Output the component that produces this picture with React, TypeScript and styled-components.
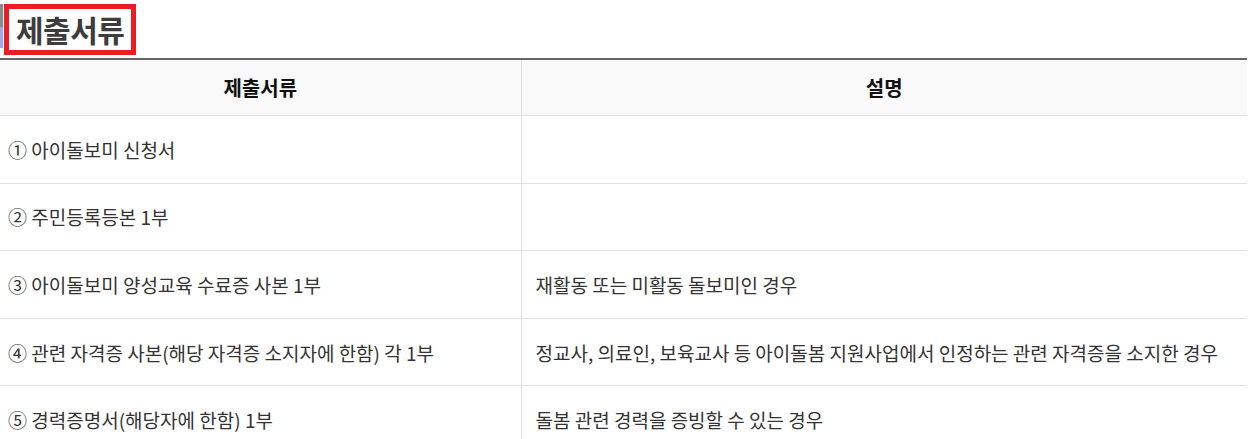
import React from "react";
import styled, { createGlobalStyle } from "styled-components";

const Global = createGlobalStyle`
  html, body { margin: 0; padding: 0; background: #fff; }
  body { font-family: "Noto Sans CJK KR", "Noto Sans", sans-serif; color: #333; }
`;

const Page = styled.div`
  width: 1247px;
`;

const TitleRow = styled.div`
  display: flex;
  align-items: flex-start;
  height: 58px;
`;

const Marker = styled.div`
  width: 3px;
  margin-top: 4px;
  display: flex;
  flex-direction: column;
`;

const MarkerPart = styled.span<{ $color: string; $h: number }>`
  display: block;
  height: ${(p) => p.$h}px;
  background: ${(p) => p.$color};
`;

const TitleBox = styled.h2`
  margin: 4px 0 0 1px;
  border: 5px solid #ec1c24;
  padding: 0 7px;
  height: 41px;
  line-height: 41px;
  font-size: 30px;
  font-weight: 700;
  color: #3d3d3d;
  letter-spacing: -0.5px;
`;

const Table = styled.table`
  width: 1247px;
  border-collapse: collapse;
  border-top: 2px solid #666;
  table-layout: fixed;
`;

const Th = styled.th`
  height: 55px;
  padding: 0;
  background: #f9f9f9;
  border-bottom: 1px solid #e1e1e1;
  border-left: 1px solid #e1e1e1;
  font-size: 20px;
  font-weight: 700;
  color: #111;
  text-align: center;
  &:first-child { border-left: none; }
`;

const Td = styled.td<{ $first?: boolean }>`
  height: 66.6px;
  padding: 0 0 0 ${(p) => (p.$first ? 8 : 14)}px;
  border-bottom: 1px solid #e1e1e1;
  border-left: ${(p) => (p.$first ? "none" : "1px solid #e1e1e1")};
  font-size: 19px;
  font-weight: 400;
  color: #333;
  text-align: left;
  vertical-align: middle;
  white-space: nowrap;
`;

const rows: [string, string][] = [
  ["① 아이돌보미 신청서", ""],
  ["② 주민등록등본 1부", ""],
  ["③ 아이돌보미 양성교육 수료증 사본 1부", "재활동 또는 미활동 돌보미인 경우"],
  [
    "④ 관련 자격증 사본(해당 자격증 소지자에 한함) 각 1부",
    "정교사, 의료인, 보육교사 등 아이돌봄 지원사업에서 인정하는 관련 자격증을 소지한 경우",
  ],
  ["⑤ 경력증명서(해당자에 한함) 1부", "돌봄 관련 경력을 증빙할 수 있는 경우"],
];

export default function App() {
  return (
    <Page>
      <Global />
      <TitleRow>
        <Marker>
          <MarkerPart $color="#8a8a8a" $h={23} />
          <MarkerPart $color="#a3a8e2" $h={21} />
        </Marker>
        <TitleBox>제출서류</TitleBox>
      </TitleRow>
      <Table>
        <colgroup>
          <col style={{ width: 521 }} />
          <col />
        </colgroup>
        <thead>
          <tr>
            <Th>제출서류</Th>
            <Th>설명</Th>
          </tr>
        </thead>
        <tbody>
          {rows.map(([a, b]) => (
            <tr key={a}>
              <Td $first>{a}</Td>
              <Td>{b}</Td>
            </tr>
          ))}
        </tbody>
      </Table>
    </Page>
  );
}
